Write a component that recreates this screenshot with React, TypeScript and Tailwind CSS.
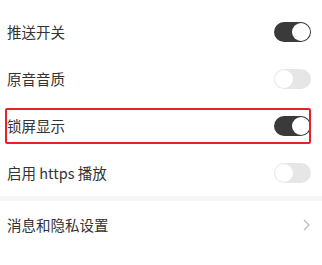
import React from "react";

function Toggle({ on }: { on: boolean }) {
  return on ? (
    <div className="w-[37px] h-[20px] rounded-full bg-[#3a3a3a] flex items-center justify-end pr-[1px]">
      <div className="w-[18px] h-[18px] rounded-full bg-white" />
    </div>
  ) : (
    <div className="w-[37px] h-[20px] rounded-full bg-[#e6e6e6] flex items-center pl-[1px]">
      <div className="w-[18px] h-[18px] rounded-full bg-white" />
    </div>
  );
}

function Row({ label, on, boxed }: { label: string; on: boolean; boxed?: boolean }) {
  return (
    <div className="relative h-[47px] flex items-center justify-between pl-[7px] pr-[11px]">
      <span className="text-[14.5px] text-[#333]">{label}</span>
      <Toggle on={on} />
      {boxed && (
        <div className="absolute left-[5px] top-[6px] w-[306px] h-[36px] border-2 border-[#e8202a] rounded-[2px] pointer-events-none" />
      )}
    </div>
  );
}

export default function App() {
  return (
    <div
      className="w-[322px] h-[265px] bg-white pt-[8px]"
      style={{ fontFamily: '"Noto Sans CJK SC", "Noto Sans", sans-serif' }}
    >
      <Row label="推送开关" on />
      <Row label="原音音质" on={false} />
      <Row label="锁屏显示" on boxed />
      <Row label="启用 https 播放" on={false} />
      <div className="h-[5px] bg-[#f6f6f6]" />
      <div className="h-[47px] flex items-center justify-between pl-[7px] pr-[12px]">
        <span className="text-[14.5px] text-[#333]">消息和隐私设置</span>
        <svg width="7" height="12" viewBox="0 0 7 12" fill="none">
          <path d="M1 1l5 5-5 5" stroke="#bbb" strokeWidth="1.3" />
        </svg>
      </div>
    </div>
  );
}
